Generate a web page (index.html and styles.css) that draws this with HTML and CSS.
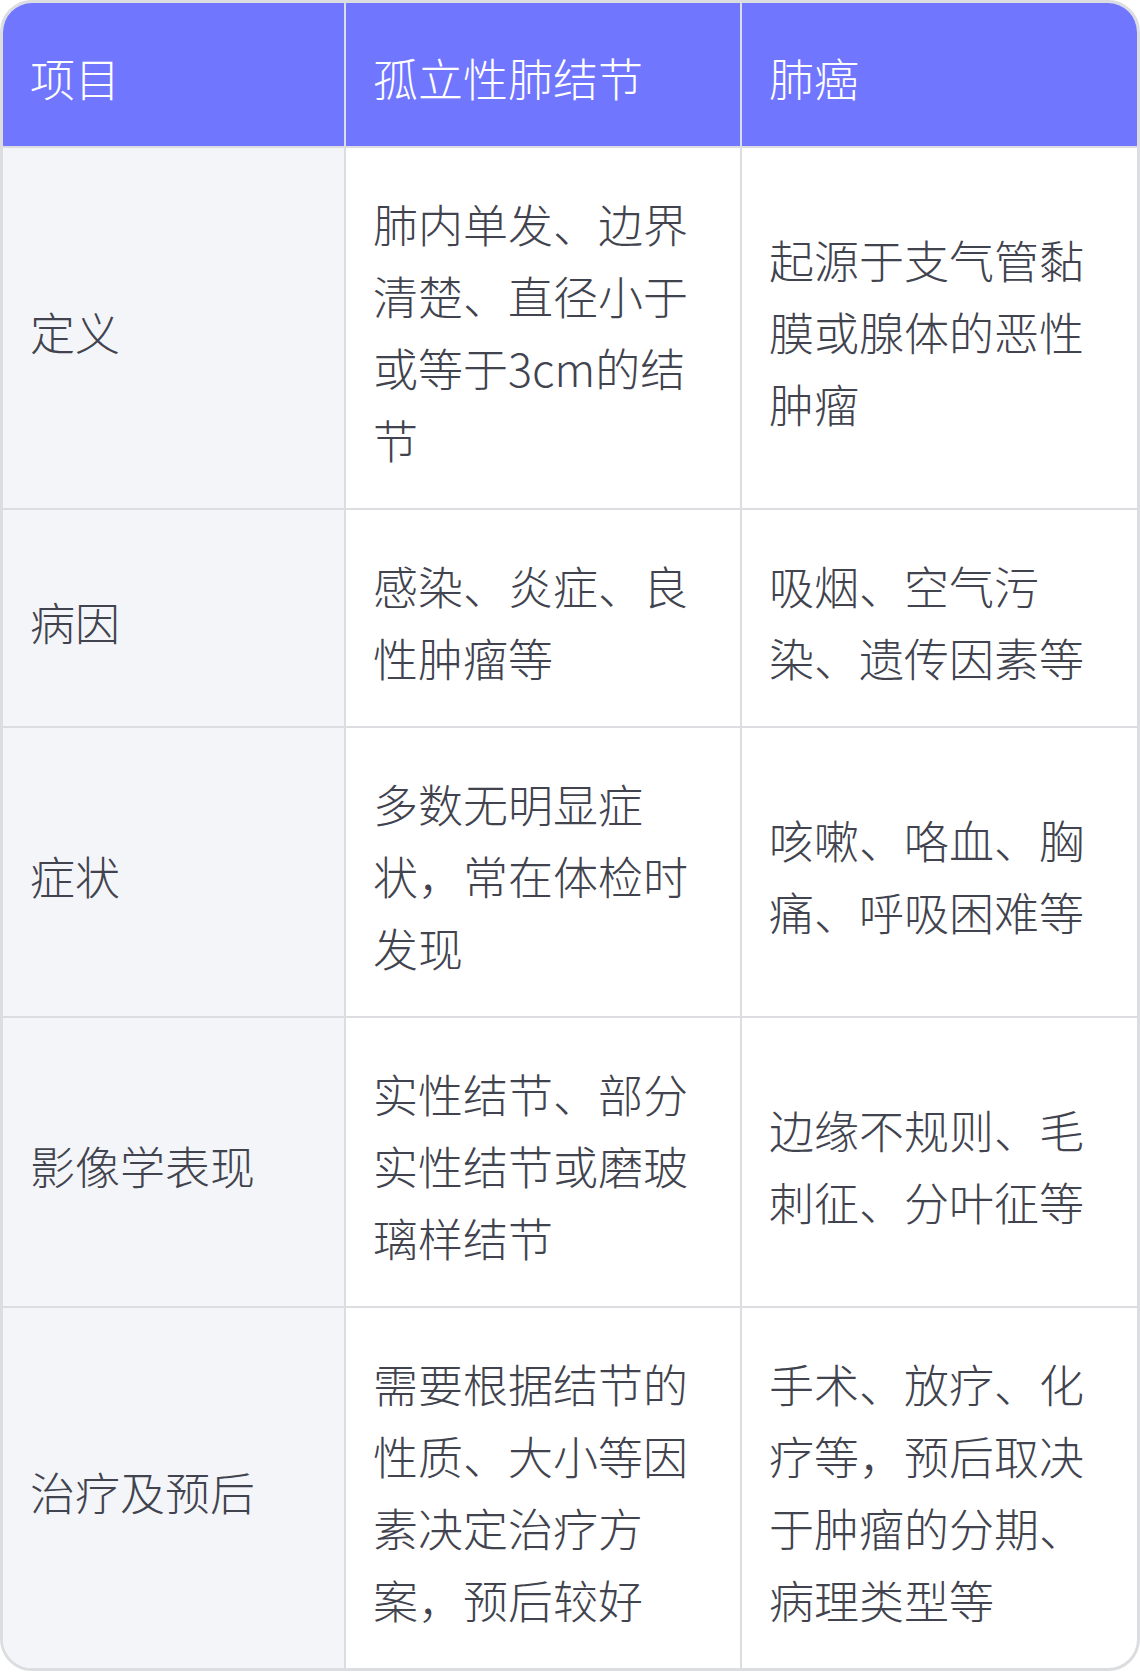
FILE: index.html
```html
<!DOCTYPE html>
<html lang="zh-CN">
<head>
<meta charset="utf-8">
<title>孤立性肺结节与肺癌对比</title>
<link rel="stylesheet" href="styles.css">
</head>
<body>
<div class="table-wrap">
  <table class="compare">
    <colgroup>
      <col class="col-item">
      <col class="col-nodule">
      <col class="col-cancer">
    </colgroup>
    <thead>
      <tr>
        <th>项目</th>
        <th>孤立性肺结节</th>
        <th>肺癌</th>
      </tr>
    </thead>
    <tbody>
      <tr>
        <td class="label">定义</td>
        <td>肺内单发、边界清楚、直径小于或等于3cm的结节</td>
        <td>起源于支气管黏膜或腺体的恶性肿瘤</td>
      </tr>
      <tr>
        <td class="label">病因</td>
        <td>感染、炎症、良性肿瘤等</td>
        <td>吸烟、空气污染、遗传因素等</td>
      </tr>
      <tr>
        <td class="label">症状</td>
        <td>多数无明显症状，常在体检时发现</td>
        <td>咳嗽、咯血、胸痛、呼吸困难等</td>
      </tr>
      <tr>
        <td class="label">影像学表现</td>
        <td>实性结节、部分实性结节或磨玻璃样结节</td>
        <td>边缘不规则、毛刺征、分叶征等</td>
      </tr>
      <tr>
        <td class="label">治疗及预后</td>
        <td>需要根据结节的性质、大小等因素决定治疗方案，预后较好</td>
        <td>手术、放疗、化疗等，预后取决于肿瘤的分期、病理类型等</td>
      </tr>
    </tbody>
  </table>
</div>
</body>
</html>
```

FILE: styles.css
```css
html, body {
  margin: 0;
  padding: 0;
  background: #ffffff;
}

.table-wrap {
  width: 1140px;
  box-sizing: border-box;
  border: 3px solid #dcdde1;
  border-radius: 32px;
  overflow: hidden;
  background: #ffffff;
}

.compare {
  width: 100%;
  border-collapse: collapse;
  table-layout: fixed;
  font-family: "Noto Sans CJK SC", "Noto Sans", sans-serif;
  font-size: 45px;
  line-height: 72px;
  font-weight: 300;
  color: #41434e;
}

.col-item { width: 342px; }
.col-nodule { width: 396px; }
.col-cancer { width: 396px; }

.compare th,
.compare td {
  border: 2px solid #dcdde1;
  padding: 40px 27px 32px;
  text-align: left;
  vertical-align: middle;
  word-break: break-all;
}

.compare tr > :first-child { border-left: none; }
.compare tr > :last-child { border-right: none; }
.compare thead th { border-top: none; }
.compare tbody tr:last-child td { border-bottom: none; }

.compare th {
  background: #7176ff;
  color: #ffffff;
  font-weight: 300;
  padding-top: 39px;
  padding-bottom: 32px;
}

.compare td.label {
  background: #f4f5f9;
}
```
